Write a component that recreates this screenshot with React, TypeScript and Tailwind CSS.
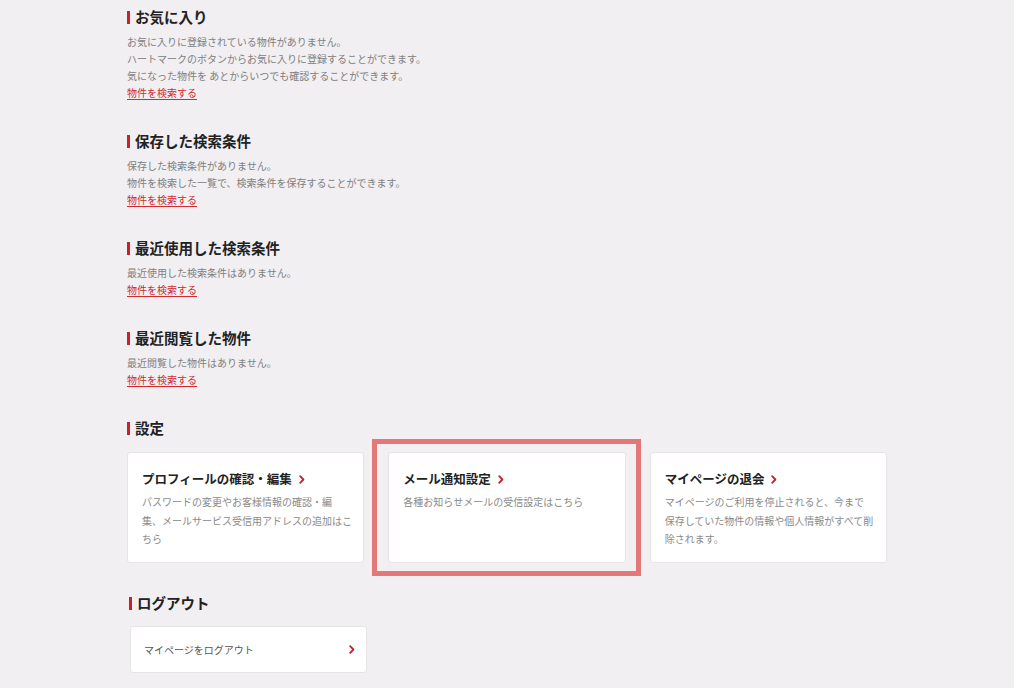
import React from "react";

const font = { fontFamily: '"Noto Sans CJK JP", "Noto Sans", sans-serif' };

function Heading({ children }: { children: React.ReactNode }) {
  return (
    <div className="flex items-center h-[20px]">
      <span className="w-[3px] h-[13px] bg-[#c8202a] mr-[5px]" />
      <h2 className="text-[14.5px] font-bold text-[#222] leading-[20px]">{children}</h2>
    </div>
  );
}

function Chevron({ className = "" }: { className?: string }) {
  return (
    <svg width="6" height="9" viewBox="0 0 6 9" className={className}>
      <path d="M1.2 1.2 L4.4 4.5 L1.2 7.8" fill="none" stroke="#c8202a" strokeWidth="1.8" strokeLinecap="round" strokeLinejoin="round" />
    </svg>
  );
}

function Section({ title, lines }: { title: string; lines: string[] }) {
  return (
    <section className="mb-[30px]">
      <Heading>{title}</Heading>
      <div className="mt-[6px] text-[10px] leading-[17px] text-[#808080]">
        {lines.map((l) => (
          <p key={l}>{l}</p>
        ))}
        <a href="#" className="text-[#d02b30] underline decoration-[#d02b30] underline-offset-2">
          物件を検索する
        </a>
      </div>
    </section>
  );
}

function Card({ title, lines }: { title: string; lines: string[] }) {
  return (
    <div className="bg-white rounded-[3px] border border-[#e6e4e7] px-[14px] pt-[17px] pb-[14px] h-[111px]">
      <div className="flex items-center gap-[7px] h-[18px]">
        <span className="text-[12.5px] font-bold text-[#222] leading-[18px]">{title}</span>
        <Chevron />
      </div>
      <div className="mt-[5px] text-[10px] leading-[18.5px] text-[#8a8a8a]">
        {lines.map((l) => (
          <p key={l} className="whitespace-nowrap">{l}</p>
        ))}
      </div>
    </div>
  );
}

export default function App() {
  return (
    <div className="min-h-[688px] bg-[#f1eff2]" style={font}>
      <div className="w-[760px] mx-auto pt-[7px] pb-[20px]">
        <Section
          title="お気に入り"
          lines={[
            "お気に入りに登録されている物件がありません。",
            "ハートマークのボタンからお気に入りに登録することができます。",
            "気になった物件を あとからいつでも確認することができます。",
          ]}
        />
        <Section
          title="保存した検索条件"
          lines={["保存した検索条件がありません。", "物件を検索した一覧で、検索条件を保存することができます。"]}
        />
        <Section title="最近使用した検索条件" lines={["最近使用した検索条件はありません。"]} />
        <Section title="最近閲覧した物件" lines={["最近閲覧した物件はありません。"]} />

        <section className="mb-[30px]">
          <Heading>設定</Heading>
          <div className="mt-[14px] grid grid-cols-3 gap-[24px]">
            <Card
              title="プロフィールの確認・編集"
              lines={["パスワードの変更やお客様情報の確認・編", "集、メールサービス受信用アドレスの追加はこ", "ちら"]}
            />
            <div className="relative">
              <Card title="メール通知設定" lines={["各種お知らせメールの受信設定はこちら"]} />
              <div className="absolute left-[-16px] right-[-15px] top-[-13px] bottom-[-13px] border-[5px] border-[#e27877] pointer-events-none" />
            </div>
            <Card
              title="マイページの退会"
              lines={["マイページのご利用を停止されると、今まで", "保存していた物件の情報や個人情報がすべて削", "除されます。"]}
            />
          </div>
        </section>

        <section className="pl-[2px]">
          <Heading>ログアウト</Heading>
          <div className="mt-[13px] ml-[1px] w-[237px] h-[47px] bg-white rounded-[3px] border border-[#e6e4e7] flex items-center justify-between pl-[13px] pr-[11px]">
            <span className="text-[10px] text-[#555]">マイページをログアウト</span>
            <Chevron />
          </div>
        </section>
      </div>
    </div>
  );
}
